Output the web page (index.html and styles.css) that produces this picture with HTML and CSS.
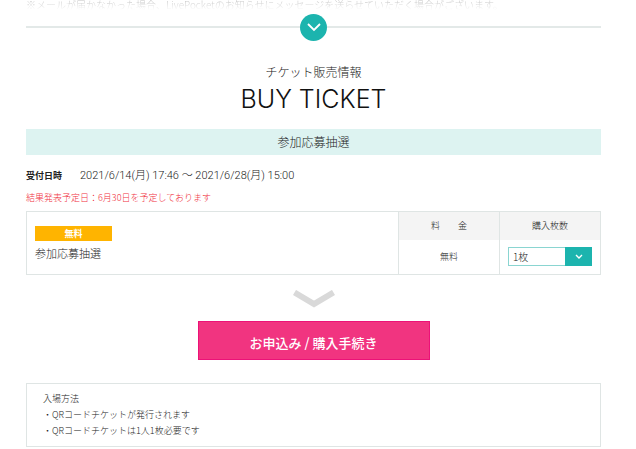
FILE: index.html
```html
<!DOCTYPE html>
<html lang="ja">
<head>
  <meta charset="UTF-8">
  <meta name="viewport" content="width=device-width, initial-scale=1">
  <title>BUY TICKET</title>
  <link rel="stylesheet" href="styles.css">
</head>
<body>
  <main class="page">
    <div class="more">
      <p class="more-text">※メールが届かなかった場合、LivePocketのお知らせにメッセージを送らせていただく場合がございます。</p>
      <div class="more-line">
        <button type="button" class="more-button" aria-label="もっと見る">
          <svg width="16" height="10" viewBox="0 0 16 10"><path d="M2 2 L8 8 L14 2" fill="none" stroke="#fff" stroke-width="1.8"/></svg>
        </button>
      </div>
    </div>

    <header class="heading">
      <p class="heading-sub">チケット販売情報</p>
      <h1>BUY TICKET</h1>
    </header>

    <h2 class="ticket-name">参加応募抽選</h2>

    <dl class="period">
      <dt>受付日時</dt>
      <dd>2021/6/14(月) 17:46 〜 2021/6/28(月) 15:00</dd>
    </dl>
    <p class="notice">結果発表予定日：6月30日を予定しております</p>

    <form>
      <table class="tickets">
        <tbody>
          <tr>
            <td class="ticket" rowspan="2">
              <span class="badge">無料</span>
              <p class="ticket-title">参加応募抽選</p>
            </td>
            <th class="price" scope="col">料　　金</th>
            <th class="count" scope="col"><label for="count">購入枚数</label></th>
          </tr>
          <tr>
            <td class="price">無料</td>
            <td class="count">
              <div class="select">
                <select id="count" name="count">
                  <option>1枚</option>
                </select>
                <span class="select-arrow">
                  <svg width="8" height="5" viewBox="0 0 8 5"><path d="M1 1 L4 4 L7 1" fill="none" stroke="#fff" stroke-width="1.4"/></svg>
                </span>
              </div>
            </td>
          </tr>
        </tbody>
      </table>

      <svg class="down" width="42" height="18" viewBox="0 0 42 18"><path d="M1.500 2.500 L21 14 L40.500 2.500" fill="none" stroke="#d9d9d9" stroke-width="6"/></svg>

      <button type="submit" class="submit">お申込み / 購入手続き</button>
    </form>

    <section class="entry">
      <p>入場方法</p>
      <p>・QRコードチケットが発行されます</p>
      <p>・QRコードチケットは1人1枚必要です</p>
    </section>
  </main>
</body>
</html>
```

FILE: styles.css
```css
* {
  box-sizing: border-box;
}
body {
  margin: 0;
  background: #fff;
  color: #222;
  font-family: "Noto Sans CJK JP", sans-serif;
  font-weight: 300;
  font-size: 9px;
  line-height: 16px;
}
p, h1, h2, dl, dd {
  margin: 0;
}
.page {
  padding: 0 35px 3px 26px;
}

/* folded description */
.more-text {
  height: 10px;
  font-size: 10px;
  line-height: 10px;
  white-space: nowrap;
  background: linear-gradient(#bbb, #fff);
  background-clip: text;
  -webkit-background-clip: text;
  color: transparent;
}
.more-line {
  display: flex;
  align-items: center;
  justify-content: center;
  height: 34px;
}
.more-line::before,
.more-line::after {
  content: "";
  flex: 1;
  height: 2px;
  background: #e3e9e8;
}
.more-button {
  display: flex;
  align-items: center;
  justify-content: center;
  width: 27px;
  height: 27px;
  padding: 0;
  border: none;
  border-radius: 50%;
  background: #1cb4ae;
  cursor: pointer;
}

.heading {
  padding-top: 18px;
  text-align: center;
}
.heading-sub {
  font-size: 12px;
  line-height: 20px;
}
h1 {
  font-family: Inter, Arial, sans-serif;
  font-size: 25px;
  font-weight: 300;
  line-height: 34px;
  color: #111;
}
.ticket-name {
  margin-top: 13px;
  background: #ddf3f1;
  font-size: 12px;
  font-weight: 300;
  line-height: 26px;
  text-align: center;
}

.period {
  display: flex;
  gap: 18px;
  margin-top: 13px;
}
.period dt {
  font-weight: bold;
}
.period dd {
  font-family: Roboto, "Noto Sans CJK JP", sans-serif;
  font-size: 11px;
}
.notice {
  margin: 6px 0 5px;
  color: #f03040;
}

.tickets {
  width: 100%;
  border: 1px solid #dfe5e4;
  border-collapse: collapse;
  table-layout: fixed;
}
.tickets th,
.tickets td {
  padding: 0;
  text-align: center;
}
.tickets th {
  height: 28px;
  background: #f4f4f4;
  font-weight: 300;
}
.tickets td {
  height: 35px;
}
.tickets .price,
.tickets .count {
  width: 101px;
  border-left: 1px solid #dfe5e4;
}
.tickets .ticket {
  padding: 0 8px;
  text-align: left;
}
.badge {
  display: block;
  width: 77px;
  background: #ffb400;
  color: #fff;
  font-weight: bold;
  line-height: 15px;
  text-align: center;
}
.ticket-title {
  margin-top: 4px;
  font-size: 11px;
}
.select {
  display: grid;
  margin: 0 8px;
}
.select select,
.select-arrow {
  grid-area: 1 / 1;
}
.select select {
  appearance: none;
  width: 100%;
  height: 19px;
  padding: 0 4px;
  border: 1px solid #8ad5d1;
  border-radius: 0;
  background: #fff;
  color: #222;
  font-family: inherit;
  font-size: 10px;
  font-weight: 300;
}
.select-arrow {
  display: flex;
  align-items: center;
  justify-content: center;
  justify-self: end;
  width: 27px;
  background: #1cb4ae;
  pointer-events: none;
}

.down {
  display: block;
  margin: 15px auto 13px;
}
.submit {
  display: block;
  width: 232px;
  height: 39px;
  margin: 0 auto;
  padding: 4px 0 0;
  border: 1px solid #ec1278;
  background: #f13480;
  color: #fff;
  font-family: inherit;
  font-size: 13px;
  font-weight: 500;
  cursor: pointer;
}

.entry {
  margin-top: 23px;
  padding: 7px 16px;
  border: 1px solid #dfe5e4;
}
```
